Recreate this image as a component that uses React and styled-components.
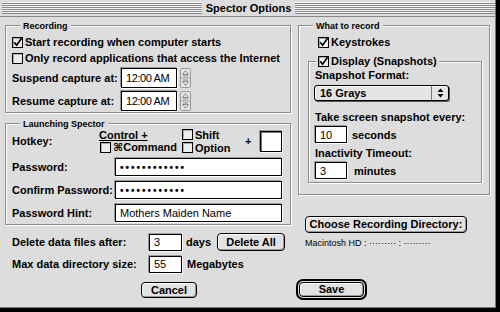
import React from 'react';
import styled, { createGlobalStyle } from 'styled-components';

const GlobalStyle = createGlobalStyle`
  html, body {
    margin: 0;
    padding: 0;
    background: #dddddd;
  }
  body {
    font-family: 'Liberation Sans', 'DejaVu Sans', Arial, sans-serif;
    font-size: 11px;
    font-weight: bold;
    color: #000;
  }
`;

const Window = styled.div`
  width: 500px;
  height: 312px;
  box-sizing: border-box;
  background: #dddddd;
  border-right: 4px solid #000;
  border-bottom: 4px solid #000;
  box-shadow: inset -1px -1px 0 #777;
  display: flex;
  flex-direction: column;
  overflow: hidden;
`;

const TitleBar = styled.div`
  height: 17px;
  box-sizing: border-box;
  border-bottom: 1px solid #888;
  display: flex;
  align-items: center;
  padding: 0 1px 0 2px;
`;

const Stripes = styled.div`
  flex: 1;
  height: 12px;
  background: repeating-linear-gradient(to bottom, #f4f4f4 0 1px, #8a8a8a 1px 2px);
`;

const Title = styled.div`
  padding: 0 4px;
  font-size: 11px;
  line-height: 16px;
`;

const Body = styled.div`
  display: flex;
  gap: 7px;
  padding: 8px 0 0 5px;
`;

const Column = styled.div`
  width: ${p => p.$w}px;
  display: flex;
  flex-direction: column;
`;

const Group = styled.div`
  position: relative;
  border: 1px solid #8c8c8c;
  box-shadow: inset 1px 1px 0 #fff, 1px 1px 0 #fff;
  padding: ${p => p.$pad};
  margin: ${p => p.$margin || 0};
  display: flex;
  flex-direction: column;
`;

const Legend = styled.div`
  position: absolute;
  top: -6px;
  left: ${p => p.$left}px;
  padding: 0 3px;
  background: #dddddd;
  font-size: 9px;
  line-height: 12px;
`;

const CheckLegend = styled.div`
  position: absolute;
  top: -9px;
  left: ${p => p.$left}px;
  padding: 0 2px;
  background: #dddddd;
`;

const CheckRow = styled.div`
  display: flex;
  align-items: center;
  gap: 2px;
  height: ${p => p.$h || 16}px;
  padding-left: ${p => p.$indent || 0}px;
  white-space: nowrap;
`;

const Row = styled.div`
  display: flex;
  align-items: center;
  height: ${p => p.$h}px;
  margin-top: ${p => p.$mt || 0}px;
  white-space: nowrap;
`;

const Label = styled.span`
  width: ${p => p.$w}px;
  flex: none;
`;

const Line = styled.div`
  height: 14px;
  line-height: 14px;
  margin-top: ${p => p.$mt || 0}px;
  white-space: nowrap;
`;

const Field = styled.div`
  width: ${p => p.$w}px;
  height: ${p => p.$h}px;
  box-sizing: border-box;
  flex: none;
  background: #fff;
  border: 1px solid #000;
  box-shadow: -1px -1px 0 #9a9a9a, 1px 1px 0 #fff;
  display: flex;
  align-items: center;
  padding-left: 4px;
  font-weight: normal;
  font-size: ${p => p.$fs || 11}px;
  letter-spacing: ${p => p.$ls || 0}px;
  overflow: hidden;
`;

const Dots = styled.span`
  font-weight: bold;
  font-size: 10px;
  letter-spacing: 2px;
`;

const Unit = styled.span`
  margin-left: ${p => p.$ml}px;
`;

const Button = styled.button`
  font-family: 'Liberation Sans', Arial, sans-serif;
  font-weight: bold;
  font-size: 11px;
  color: #000;
  width: ${p => p.$w}px;
  height: ${p => p.$h}px;
  margin-left: ${p => p.$ml || 0}px;
  margin-top: ${p => p.$mt || 0}px;
  flex: none;
  padding: 0;
  border: 1px solid #000;
  border-radius: 4px;
  background: #e2e2e2;
  box-shadow: inset 1px 1px 0 #fff, inset -1px -1px 0 #9a9a9a;
  line-height: 1;
`;

const DefaultRing = styled.div`
  width: 71px;
  height: 21px;
  box-sizing: border-box;
  border: 2px solid #000;
  border-radius: 7px;
  padding: 1px;
  display: flex;
  margin: ${p => p.$margin};

  ${Button} {
    width: 100%;
    height: 100%;
  }
`;

const Modifiers = styled.div`
  display: grid;
  grid-template-columns: 83px 63px;
  grid-auto-rows: 13px;
  align-items: center;
`;

const Underlined = styled.span`
  text-decoration: underline;
`;

const Plus = styled.span`
  width: 15px;
  flex: none;
`;

const KeyBox = styled.div`
  width: 22px;
  height: 21px;
  box-sizing: border-box;
  background: #fff;
  border: 1px solid #000;
  box-shadow: inset 1px 1px 0 #777, -1px -1px 0 #9a9a9a, 1px 1px 0 #fff;
`;

const BottomRows = styled.div`
  display: flex;
  flex-direction: column;
  padding-left: 7px;
  margin-top: 8px;
`;

const Popup = styled.div`
  width: 135px;
  height: 16px;
  box-sizing: border-box;
  margin: 3px 0 0 -1px;
  border: 1px solid #000;
  border-radius: 3px;
  background: #e4e4e4;
  box-shadow: inset 1px 1px 0 #fff, 1px 1px 0 #555;
  display: flex;
  align-items: center;
`;

const PopupText = styled.span`
  flex: 1;
  padding-left: 5px;
`;

const PopupArrows = styled.div`
  width: 16px;
  height: 100%;
  border-left: 1px solid #777;
  display: flex;
  align-items: center;
  justify-content: center;
`;

const PathText = styled.div`
  margin: 5px 0 0 7px;
  font-size: 9px;
  font-weight: normal;
  line-height: 10px;
  white-space: nowrap;
`;

const CheckBox = ({ checked }) => (
  <svg width="11" height="11" viewBox="0 0 11 11" style={{ flex: 'none' }}>
    <rect x="0.5" y="0.5" width="10" height="10" fill="#eeeeee" stroke="#000" />
    <path d="M1.5 9.5 V1.5 H9.5" fill="none" stroke="#aaa" />
    {checked && <path d="M2.2 5.2 L4.6 8.2 L9.6 1.2" fill="none" stroke="#000" strokeWidth="1.7" />}
  </svg>
);

const Stepper = () => (
  <svg width="11" height="20" viewBox="0 0 11 20" style={{ marginLeft: 3, flex: 'none' }}>
    <rect x="0.5" y="0.5" width="10" height="19" rx="1.5" fill="#e6e6e6" stroke="#9a9a9a" />
    <line x1="1" y1="10" x2="10" y2="10" stroke="#9a9a9a" />
    <path d="M5.5 2.5 L8.5 6.5 H2.5 Z" fill="none" stroke="#8a8a8a" />
    <line x1="3" y1="8" x2="8" y2="8" stroke="#8a8a8a" />
    <path d="M5.5 17.5 L8.5 13.5 H2.5 Z" fill="none" stroke="#8a8a8a" />
    <line x1="3" y1="12" x2="8" y2="12" stroke="#8a8a8a" />
  </svg>
);

const UpDown = () => (
  <svg width="7" height="10" viewBox="0 0 7 10">
    <path d="M3.5 0.5 L6.5 4 H0.5 Z" fill="#000" />
    <path d="M3.5 9.5 L6.5 6 H0.5 Z" fill="#000" />
  </svg>
);

const TimeRow = ({ label, mt }) => (
  <Row $h={20} $mt={mt}>
    <Label $w={109}>{label}</Label>
    <Field $w={56} $h={20} $fs={11} $ls={-0.4}>12:00 AM</Field>
    <Stepper />
  </Row>
);

const PasswordRow = ({ label, mt, children }) => (
  <Row $h={18} $mt={mt}>
    <Label $w={103}>{label}</Label>
    <Field $w={167} $h={18}>{children}</Field>
  </Row>
);

export default function App() {
  return (
    <>
      <GlobalStyle />
      <Window>
        <TitleBar>
          <Stripes />
          <Title>Spector Options</Title>
          <Stripes />
        </TitleBar>
        <Body>
          <Column $w={286}>
            <Group $pad="8px 0 1px 6px">
              <Legend $left={14}>Recording</Legend>
              <CheckRow><CheckBox checked />Start recording when computer starts</CheckRow>
              <CheckRow><CheckBox />Only record applications that access the Internet</CheckRow>
              <TimeRow label="Suspend capture at:" mt={2} />
              <TimeRow label="Resume capture at:" mt={3} />
            </Group>

            <Group $pad="4px 0 2px 6px" $margin="10px 0 0 0">
              <Legend $left={14}>Launching Spector</Legend>
              <Row $h={26}>
                <Label $w={87}>Hotkey:</Label>
                <Modifiers>
                  <Underlined>Control +</Underlined>
                  <CheckRow $h={13}><CheckBox />Shift</CheckRow>
                  <CheckRow $h={13} $indent={1}><CheckBox />⌘Command</CheckRow>
                  <CheckRow $h={13}><CheckBox />Option</CheckRow>
                </Modifiers>
                <Plus>+</Plus>
                <KeyBox />
              </Row>
              <PasswordRow label="Password:" mt={4}><Dots>••••••••••••</Dots></PasswordRow>
              <PasswordRow label="Confirm Password:" mt={5}><Dots>••••••••••••</Dots></PasswordRow>
              <PasswordRow label="Password Hint:" mt={5}>Mothers Maiden Name</PasswordRow>
            </Group>

            <BottomRows>
              <Row $h={18}>
                <Label $w={137}>Delete data files after:</Label>
                <Field $w={33} $h={17}>3</Field>
                <Unit $ml={4}>days</Unit>
                <Button $w={68} $h={18} $ml={6}>Delete All</Button>
              </Row>
              <Row $h={18} $mt={4}>
                <Label $w={137}>Max data directory size:</Label>
                <Field $w={33} $h={17}>55</Field>
                <Unit $ml={5}>Megabytes</Unit>
              </Row>
              <Button $w={56} $h={16} $ml={129} $mt={9}>Cancel</Button>
            </BottomRows>
          </Column>

          <Column $w={192}>
            <Group $pad="8px 7px 11px 9px">
              <Legend $left={14}>What to record</Legend>
              <CheckRow $indent={10}><CheckBox checked />Keystrokes</CheckRow>
              <Group $pad="6px 0 3px 6px" $margin="11px 0 0 0">
                <CheckLegend $left={7}>
                  <CheckRow><CheckBox checked />Display (Snapshots)</CheckRow>
                </CheckLegend>
                <Line>Snapshot Format:</Line>
                <Popup>
                  <PopupText>16 Grays</PopupText>
                  <PopupArrows><UpDown /></PopupArrows>
                </Popup>
                <Line $mt={9}>Take screen snapshot every:</Line>
                <Row $h={17} $mt={2}>
                  <Field $w={32} $h={17}>10</Field>
                  <Unit $ml={5}>seconds</Unit>
                </Row>
                <Line $mt={3}>Inactivity Timeout:</Line>
                <Row $h={17} $mt={2}>
                  <Field $w={32} $h={17}>3</Field>
                  <Unit $ml={7}>minutes</Unit>
                </Row>
              </Group>
            </Group>
            <Button $w={162} $h={17} $ml={7} $mt={21}>Choose Recording Directory:</Button>
            <PathText>Macintosh HD : ········· : ·········</PathText>
            <DefaultRing $margin="31px 0 0 -2px">
              <Button>Save</Button>
            </DefaultRing>
          </Column>
        </Body>
      </Window>
    </>
  );
}
